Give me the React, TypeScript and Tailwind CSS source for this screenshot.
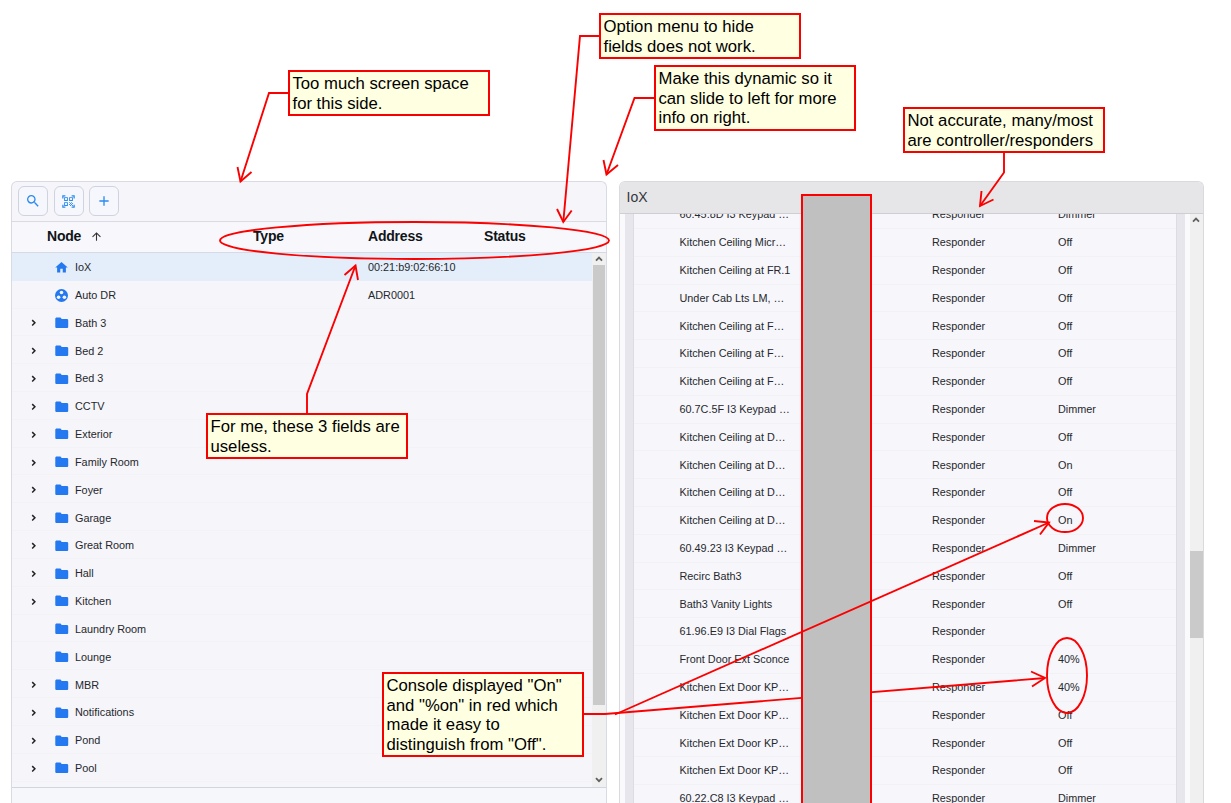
import React from "react";
import {
  MdAdd,
  MdArrowUpward,
  MdFolder,
  MdHome,
  MdQrCodeScanner,
  MdSearch,
} from "react-icons/md";

type TreeNode = {
  name: string;
  kind?: "home" | "group";
  address?: string;
  leaf?: boolean;
};

const nodes: TreeNode[] = [
  { name: "IoX", kind: "home", address: "00:21:b9:02:66:10", leaf: true },
  { name: "Auto DR", kind: "group", address: "ADR0001", leaf: true },
  { name: "Bath 3" },
  { name: "Bed 2" },
  { name: "Bed 3" },
  { name: "CCTV" },
  { name: "Exterior" },
  { name: "Family Room" },
  { name: "Foyer" },
  { name: "Garage" },
  { name: "Great Room" },
  { name: "Hall" },
  { name: "Kitchen" },
  { name: "Laundry Room", leaf: true },
  { name: "Lounge", leaf: true },
  { name: "MBR" },
  { name: "Notifications" },
  { name: "Pond" },
  { name: "Pool" },
];

const devices: [string, string][] = [
  ["60.45.8D I3 Keypad …", "Dimmer"],
  ["Kitchen Ceiling Micr…", "Off"],
  ["Kitchen Ceiling at FR.1", "Off"],
  ["Under Cab Lts LM, …", "Off"],
  ["Kitchen Ceiling at F…", "Off"],
  ["Kitchen Ceiling at F…", "Off"],
  ["Kitchen Ceiling at F…", "Off"],
  ["60.7C.5F I3 Keypad …", "Dimmer"],
  ["Kitchen Ceiling at D…", "Off"],
  ["Kitchen Ceiling at D…", "On"],
  ["Kitchen Ceiling at D…", "Off"],
  ["Kitchen Ceiling at D…", "On"],
  ["60.49.23 I3 Keypad …", "Dimmer"],
  ["Recirc Bath3", "Off"],
  ["Bath3 Vanity Lights", "Off"],
  ["61.96.E9 I3 Dial Flags", ""],
  ["Front Door Ext Sconce", "40%"],
  ["Kitchen Ext Door KP…", "40%"],
  ["Kitchen Ext Door KP…", "Off"],
  ["Kitchen Ext Door KP…", "Off"],
  ["Kitchen Ext Door KP…", "Off"],
  ["60.22.C8 I3 Keypad …", "Dimmer"],
];

function ToolButton({ children }: { children: React.ReactNode }) {
  return (
    <button className="flex size-[30px] items-center justify-center rounded-[6px] border border-[#cfd3df] bg-[#f6f7fc] text-[#2b8af0]">
      {children}
    </button>
  );
}

function Caret({ down }: { down?: boolean }) {
  return (
    <svg viewBox="0 0 8 6" className="h-[6px] w-[8px]" fill="none" stroke="#606060" strokeWidth="1.8">
      <path d={down ? "M1 1.2 4 4.2 7 1.2" : "M1 4.6 4 1.6 7 4.6"} />
    </svg>
  );
}

function Chevron() {
  return (
    <svg viewBox="0 0 13 13" className="size-[13px]" fill="none" stroke="#222" strokeWidth="1.5">
      <path d="M5.2 4.1 7.9 6.8 5.2 9.5" />
    </svg>
  );
}

function GroupIcon() {
  return (
    <svg viewBox="0 0 15 15" className="size-[15px]">
      <circle cx="7.5" cy="7.5" r="6.5" fill="#2478f0" />
      <g fill="#f5f5fa">
        <circle cx="7.5" cy="4.5" r="1.8" />
        <circle cx="4.6" cy="9.2" r="1.8" />
        <circle cx="10.4" cy="9.2" r="1.8" />
      </g>
    </svg>
  );
}

function NodePanel() {
  return (
    <section className="flex w-[596px] flex-none flex-col rounded-t-[6px] border-[1.5px] border-b-0 border-[#d9dbe4] bg-[#f5f5fa]">
      <div className="flex h-[40px] flex-none items-center gap-[5.5px] border-b border-[#d9dbe2] pl-[6px]">
        <ToolButton><MdSearch size={16} /></ToolButton>
        <ToolButton><MdQrCodeScanner size={15} /></ToolButton>
        <ToolButton><MdAdd size={16} /></ToolButton>
      </div>
      <div className="flex h-[31px] flex-none items-center border-b-[1.5px] border-[#d6dae5] bg-[#f8f8fc] text-[14px] tracking-[-0.2px] font-bold text-[#111418]">
        <span className="flex w-[241px] items-center gap-[9px] pl-[35px]">
          Node <MdArrowUpward size={13} className="text-[#333]" />
        </span>
        <span className="w-[115px]">Type</span>
        <span className="w-[116px]">Address</span>
        <span>Status</span>
      </div>
      <div className="flex h-[535px] flex-none border-b-[1.5px] border-[#cfd6e2]">
        <div className="flex flex-1 flex-col">
          {nodes.map((node) => (
            <div
              key={node.name}
              className={
                "flex flex-none items-center text-[10.85px] text-[#26282c] " +
                (node.kind === "home"
                  ? "h-[28.2px] bg-[#e3eefa] pt-[1px]"
                  : "h-[27.83px] border-b border-[#f2f2f7] pt-[2px]")
              }
            >
              <span className="w-[42px] pl-[15px]">{!node.leaf && <Chevron />}</span>
              <span className="w-[21px] text-[#2478f0]">
                {node.kind === "home" ? (
                  <MdHome size={15} />
                ) : node.kind === "group" ? (
                  <GroupIcon />
                ) : (
                  <MdFolder size={15.5} />
                )}
              </span>
              <span className="w-[293px]">{node.name}</span>
              <span>{node.address}</span>
            </div>
          ))}
        </div>
        <div className="flex w-[14px] flex-none flex-col items-center bg-[#f0f0f1]">
          <span className="flex h-[12px] items-center"><Caret /></span>
          <span className="h-[440px] w-[12.5px] bg-[#cacaca]" />
          <span className="mt-auto flex h-[13px] items-center"><Caret down /></span>
        </div>
      </div>
      <div className="flex-1 bg-[#f6f7fb]" />
    </section>
  );
}

function DevicePanel() {
  return (
    <section className="flex w-[585px] flex-none flex-col rounded-t-[6px] border border-b-0 border-[#d9d9de] bg-[#fafafd]">
      <div className="flex h-[32.5px] flex-none items-center rounded-t-[5px] border-b border-[#cfcfd3] bg-[#e6e6e8] pl-[6.5px] text-[14px] text-[#33363c]">
        IoX
      </div>
      <div className="flex min-h-0 flex-1">
        <div className="ml-[5px] flex w-[560px] overflow-hidden bg-[#e6e6ec] px-[8px]">
          <div className="-mt-[12.8px] flex w-full flex-none flex-col border-x border-[#dcdce2] bg-[#f6f6fb]">
            {devices.map(([name, status], i) => (
              <div
                key={i}
                className="flex h-[27.81px] flex-none items-center border-b border-[#f2f2f6] pl-[45.5px] text-[10.85px] text-[#26282c]"
              >
                <span className="w-[252.5px]">{name}</span>
                <span className="w-[126px]">Responder</span>
                <span>{status}</span>
              </div>
            ))}
          </div>
        </div>
        <div className="ml-auto flex w-[13.5px] flex-col items-center bg-[#f0f0f1]">
          <span className="flex h-[12px] items-center"><Caret /></span>
          <span className="mt-[324.5px] h-[87px] w-full bg-[#cacaca]" />
        </div>
      </div>
    </section>
  );
}

function Note({ className, lines }: { className: string; lines: string[] }) {
  return (
    <div
      className={
        "absolute border-2 border-[#f80000] bg-[#ffffe1] pt-[2px] pl-[2.5px] text-[16.7px] leading-[19.6px] whitespace-nowrap text-black " +
        className
      }
    >
      {lines.map((line) => (
        <div key={line}>{line}</div>
      ))}
    </div>
  );
}

export default function App() {
  return (
    <main className="relative flex h-[803px] w-[1231px] items-stretch gap-[12px] overflow-hidden bg-white pt-[180.5px] pl-[11px] font-['Liberation_Sans',Arial,sans-serif]">
      <NodePanel />
      <DevicePanel />

      {/* Callout connectors and markers */}
      <svg
        className="pointer-events-none absolute inset-0"
        width="1231"
        height="803"
        fill="none"
        stroke="#fb0000"
        strokeWidth="1.9"
      >
        <path d="M583 714H605L1045 678" />
        <path d="M1031 671.5 1045 678 1032 686.5" />
        <rect x="802" y="195" width="69" height="620" fill="#c0c0c0" strokeWidth="2" />
        <path d="M615 714.5 1049 522.5" />
        <path d="M1034 521 1049 522.5 1040 534.5" />
        <path d="M289 93H269L240.5 181.5" />
        <path d="M237.5 167 240.5 181.5 251.5 172" />
        <path d="M600 36H580L563.3 222" />
        <path d="M557 209 563.3 222 571.7 210.5" />
        <path d="M654 98H634.5L606.5 174.5" />
        <path d="M603.5 160 606.5 174.5 618 165" />
        <path d="M1004 152V172.5L980 206" />
        <path d="M981.5 191 980 206 993.5 199.5" />
        <path d="M307 414V394L355.5 265.5" />
        <path d="M344.5 275 355.5 265.5 358 280" />
        <ellipse cx="414.5" cy="240.5" rx="194.5" ry="18.5" />
        <ellipse cx="1065" cy="518" rx="18" ry="14" />
        <ellipse cx="1067" cy="675.5" rx="20" ry="37.5" />
      </svg>

      <Note className="top-[70px] left-[288px] h-[46px] w-[202px]" lines={["Too much screen space", "for this side."]} />
      <Note className="top-[13px] left-[599px] h-[46px] w-[202px]" lines={["Option menu to hide", "fields does not work."]} />
      <Note className="top-[65px] left-[654px] h-[66px] w-[202px]" lines={["Make this dynamic so it", "can slide to left for more", "info on right."]} />
      <Note className="top-[107px] left-[903px] h-[46px] w-[202px]" lines={["Not accurate, many/most", "are controller/responders"]} />
      <Note className="top-[413px] left-[206px] h-[46px] w-[202px]" lines={["For me, these 3 fields are", "useless."]} />
      <Note
        className="top-[672px] left-[382px] h-[85px] w-[202px]"
        lines={['Console displayed "On"', 'and "%on" in red which', "made it easy to", 'distinguish from "Off".']}
      />
    </main>
  );
}
